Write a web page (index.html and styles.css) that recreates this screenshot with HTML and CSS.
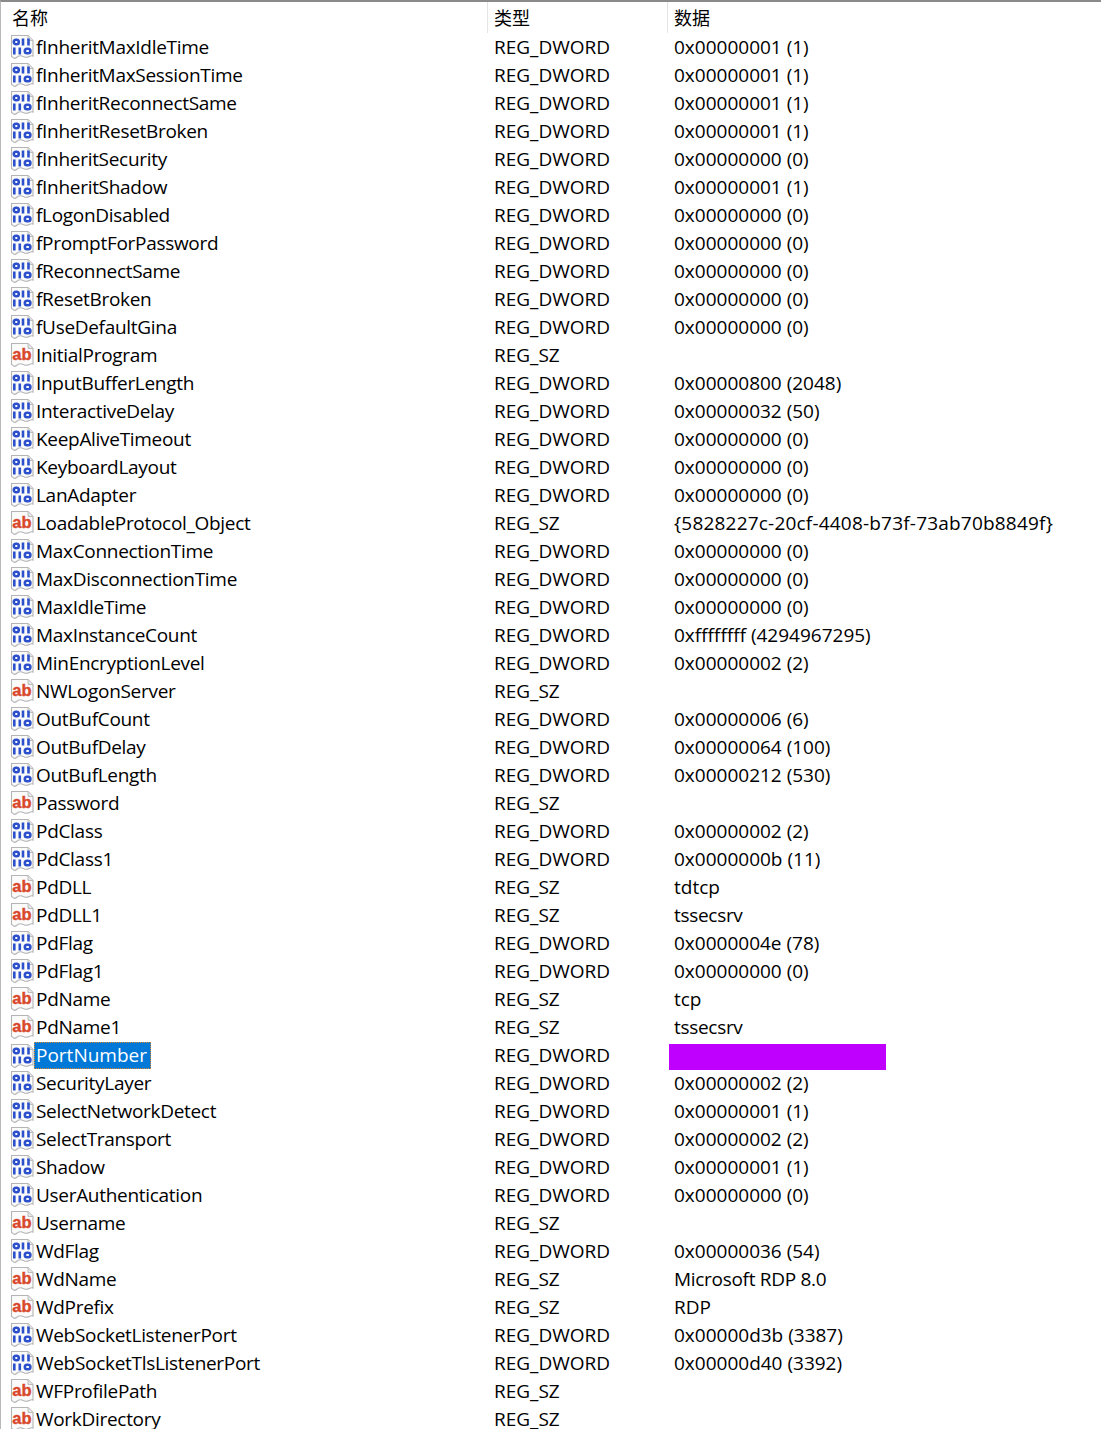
FILE: index.html
```html
<!DOCTYPE html>
<html lang="zh">
<head>
<meta charset="utf-8">
<title>注册表</title>
<link rel="stylesheet" href="styles.css">
</head>
<body>
<svg class="defs" width="0" height="0" aria-hidden="true">
  <symbol id="page" viewBox="0 0 24 24">
    <path d="M1.500 .500H18L23 5.500V21C20.500 19.500 18 23.500 14.500 22S9 20 6.500 22.500S2.500 21.500 1.500 21.500Z" fill="#fbfbfb" stroke="#b4b4b4" stroke-width="1.100"/>
    <path d="M18 .500V5.500H23" fill="#e4e4e4" stroke="#bdbdbd"/>
  </symbol>
  <symbol id="bin" viewBox="0 0 24 24">
    <use href="#page"/>
    <g fill="none" stroke="#2c50cc" stroke-width="2.600">
      <rect x="3.800" y="4.800" width="5" height="4.400" rx="2.200"/>
      <path d="M13 3.500V10.500M18.500 3.500V10.500"/>
      <path d="M4.300 12.500V19.500M9.800 12.500V19.500"/>
      <rect x="14.800" y="13.800" width="5.600" height="4.400" rx="2.200"/>
    </g>
  </symbol>
  <symbol id="str" viewBox="0 0 24 24">
    <use href="#page"/>
    <text x="12" y="17" class="ab">ab</text>
  </symbol>
</svg>
<main class="list">
  <header class="head">
    <div class="hcell first">名称</div>
    <div class="hcell">类型</div>
    <div class="hcell">数据</div>
  </header>
  <div class="row"><div class="name"><svg class="ico"><use href="#bin"/></svg><span>fInheritMaxIdleTime</span></div><div>REG_DWORD</div><div>0x00000001 (1)</div></div>
  <div class="row"><div class="name"><svg class="ico"><use href="#bin"/></svg><span>fInheritMaxSessionTime</span></div><div>REG_DWORD</div><div>0x00000001 (1)</div></div>
  <div class="row"><div class="name"><svg class="ico"><use href="#bin"/></svg><span>fInheritReconnectSame</span></div><div>REG_DWORD</div><div>0x00000001 (1)</div></div>
  <div class="row"><div class="name"><svg class="ico"><use href="#bin"/></svg><span>fInheritResetBroken</span></div><div>REG_DWORD</div><div>0x00000001 (1)</div></div>
  <div class="row"><div class="name"><svg class="ico"><use href="#bin"/></svg><span>fInheritSecurity</span></div><div>REG_DWORD</div><div>0x00000000 (0)</div></div>
  <div class="row"><div class="name"><svg class="ico"><use href="#bin"/></svg><span>fInheritShadow</span></div><div>REG_DWORD</div><div>0x00000001 (1)</div></div>
  <div class="row"><div class="name"><svg class="ico"><use href="#bin"/></svg><span>fLogonDisabled</span></div><div>REG_DWORD</div><div>0x00000000 (0)</div></div>
  <div class="row"><div class="name"><svg class="ico"><use href="#bin"/></svg><span>fPromptForPassword</span></div><div>REG_DWORD</div><div>0x00000000 (0)</div></div>
  <div class="row"><div class="name"><svg class="ico"><use href="#bin"/></svg><span>fReconnectSame</span></div><div>REG_DWORD</div><div>0x00000000 (0)</div></div>
  <div class="row"><div class="name"><svg class="ico"><use href="#bin"/></svg><span>fResetBroken</span></div><div>REG_DWORD</div><div>0x00000000 (0)</div></div>
  <div class="row"><div class="name"><svg class="ico"><use href="#bin"/></svg><span>fUseDefaultGina</span></div><div>REG_DWORD</div><div>0x00000000 (0)</div></div>
  <div class="row"><div class="name"><svg class="ico"><use href="#str"/></svg><span>InitialProgram</span></div><div>REG_SZ</div><div></div></div>
  <div class="row"><div class="name"><svg class="ico"><use href="#bin"/></svg><span>InputBufferLength</span></div><div>REG_DWORD</div><div>0x00000800 (2048)</div></div>
  <div class="row"><div class="name"><svg class="ico"><use href="#bin"/></svg><span>InteractiveDelay</span></div><div>REG_DWORD</div><div>0x00000032 (50)</div></div>
  <div class="row"><div class="name"><svg class="ico"><use href="#bin"/></svg><span>KeepAliveTimeout</span></div><div>REG_DWORD</div><div>0x00000000 (0)</div></div>
  <div class="row"><div class="name"><svg class="ico"><use href="#bin"/></svg><span>KeyboardLayout</span></div><div>REG_DWORD</div><div>0x00000000 (0)</div></div>
  <div class="row"><div class="name"><svg class="ico"><use href="#bin"/></svg><span>LanAdapter</span></div><div>REG_DWORD</div><div>0x00000000 (0)</div></div>
  <div class="row"><div class="name"><svg class="ico"><use href="#str"/></svg><span>LoadableProtocol_Object</span></div><div>REG_SZ</div><div class="guid">{5828227c-20cf-4408-b73f-73ab70b8849f}</div></div>
  <div class="row"><div class="name"><svg class="ico"><use href="#bin"/></svg><span>MaxConnectionTime</span></div><div>REG_DWORD</div><div>0x00000000 (0)</div></div>
  <div class="row"><div class="name"><svg class="ico"><use href="#bin"/></svg><span>MaxDisconnectionTime</span></div><div>REG_DWORD</div><div>0x00000000 (0)</div></div>
  <div class="row"><div class="name"><svg class="ico"><use href="#bin"/></svg><span>MaxIdleTime</span></div><div>REG_DWORD</div><div>0x00000000 (0)</div></div>
  <div class="row"><div class="name"><svg class="ico"><use href="#bin"/></svg><span>MaxInstanceCount</span></div><div>REG_DWORD</div><div>0xffffffff (4294967295)</div></div>
  <div class="row"><div class="name"><svg class="ico"><use href="#bin"/></svg><span>MinEncryptionLevel</span></div><div>REG_DWORD</div><div>0x00000002 (2)</div></div>
  <div class="row"><div class="name"><svg class="ico"><use href="#str"/></svg><span>NWLogonServer</span></div><div>REG_SZ</div><div></div></div>
  <div class="row"><div class="name"><svg class="ico"><use href="#bin"/></svg><span>OutBufCount</span></div><div>REG_DWORD</div><div>0x00000006 (6)</div></div>
  <div class="row"><div class="name"><svg class="ico"><use href="#bin"/></svg><span>OutBufDelay</span></div><div>REG_DWORD</div><div>0x00000064 (100)</div></div>
  <div class="row"><div class="name"><svg class="ico"><use href="#bin"/></svg><span>OutBufLength</span></div><div>REG_DWORD</div><div>0x00000212 (530)</div></div>
  <div class="row"><div class="name"><svg class="ico"><use href="#str"/></svg><span>Password</span></div><div>REG_SZ</div><div></div></div>
  <div class="row"><div class="name"><svg class="ico"><use href="#bin"/></svg><span>PdClass</span></div><div>REG_DWORD</div><div>0x00000002 (2)</div></div>
  <div class="row"><div class="name"><svg class="ico"><use href="#bin"/></svg><span>PdClass1</span></div><div>REG_DWORD</div><div>0x0000000b (11)</div></div>
  <div class="row"><div class="name"><svg class="ico"><use href="#str"/></svg><span>PdDLL</span></div><div>REG_SZ</div><div>tdtcp</div></div>
  <div class="row"><div class="name"><svg class="ico"><use href="#str"/></svg><span>PdDLL1</span></div><div>REG_SZ</div><div class="word">tssecsrv</div></div>
  <div class="row"><div class="name"><svg class="ico"><use href="#bin"/></svg><span>PdFlag</span></div><div>REG_DWORD</div><div>0x0000004e (78)</div></div>
  <div class="row"><div class="name"><svg class="ico"><use href="#bin"/></svg><span>PdFlag1</span></div><div>REG_DWORD</div><div>0x00000000 (0)</div></div>
  <div class="row"><div class="name"><svg class="ico"><use href="#str"/></svg><span>PdName</span></div><div>REG_SZ</div><div>tcp</div></div>
  <div class="row"><div class="name"><svg class="ico"><use href="#str"/></svg><span>PdName1</span></div><div>REG_SZ</div><div class="word">tssecsrv</div></div>
  <div class="row"><div class="name"><svg class="ico"><use href="#bin"/></svg><span class="selected">PortNumber</span></div><div>REG_DWORD</div><div class="redact-cell"><div class="redact"></div></div></div>
  <div class="row"><div class="name"><svg class="ico"><use href="#bin"/></svg><span>SecurityLayer</span></div><div>REG_DWORD</div><div>0x00000002 (2)</div></div>
  <div class="row"><div class="name"><svg class="ico"><use href="#bin"/></svg><span>SelectNetworkDetect</span></div><div>REG_DWORD</div><div>0x00000001 (1)</div></div>
  <div class="row"><div class="name"><svg class="ico"><use href="#bin"/></svg><span>SelectTransport</span></div><div>REG_DWORD</div><div>0x00000002 (2)</div></div>
  <div class="row"><div class="name"><svg class="ico"><use href="#bin"/></svg><span>Shadow</span></div><div>REG_DWORD</div><div>0x00000001 (1)</div></div>
  <div class="row"><div class="name"><svg class="ico"><use href="#bin"/></svg><span>UserAuthentication</span></div><div>REG_DWORD</div><div>0x00000000 (0)</div></div>
  <div class="row"><div class="name"><svg class="ico"><use href="#str"/></svg><span>Username</span></div><div>REG_SZ</div><div></div></div>
  <div class="row"><div class="name"><svg class="ico"><use href="#bin"/></svg><span>WdFlag</span></div><div>REG_DWORD</div><div>0x00000036 (54)</div></div>
  <div class="row"><div class="name"><svg class="ico"><use href="#str"/></svg><span>WdName</span></div><div>REG_SZ</div><div class="word">Microsoft RDP 8.0</div></div>
  <div class="row"><div class="name"><svg class="ico"><use href="#str"/></svg><span>WdPrefix</span></div><div>REG_SZ</div><div>RDP</div></div>
  <div class="row"><div class="name"><svg class="ico"><use href="#bin"/></svg><span>WebSocketListenerPort</span></div><div>REG_DWORD</div><div>0x00000d3b (3387)</div></div>
  <div class="row"><div class="name"><svg class="ico"><use href="#bin"/></svg><span>WebSocketTlsListenerPort</span></div><div>REG_DWORD</div><div>0x00000d40 (3392)</div></div>
  <div class="row"><div class="name"><svg class="ico"><use href="#str"/></svg><span>WFProfilePath</span></div><div>REG_SZ</div><div></div></div>
  <div class="row"><div class="name"><svg class="ico"><use href="#str"/></svg><span>WorkDirectory</span></div><div>REG_SZ</div><div></div></div>
</main>
</body>
</html>
```
FILE: styles.css
```css
html, body {
  margin: 0;
  padding: 0;
  height: 100%;
  overflow: hidden;
  background: #fff;
}
.defs {
  position: absolute;
}
.list {
  height: 1429px;
  box-sizing: border-box;
  overflow: hidden;
  border-top: 2px solid #8a8a8a;
  border-left: 1px solid #b9b9b9;
  font-family: "Open Sans", "Noto Sans CJK SC", sans-serif;
  font-size: 19px;
  color: #000;
}
.head {
  display: grid;
  grid-template-columns: 486px 180px 1fr;
  height: 31px;
}
.hcell {
  padding-left: 6px;
  line-height: 30px;
  border-left: 1px solid #e5e5e5;
  font-family: "Noto Sans CJK SC", sans-serif;
  font-size: 18px;
}
.hcell.first {
  padding-left: 11px;
  border-left: 0;
}
.row {
  display: grid;
  grid-template-columns: 493px 180px 1fr;
  height: 28px;
  line-height: 28px;
  white-space: nowrap;
}
.name {
  display: flex;
  align-items: center;
  padding-left: 9px;
  letter-spacing: -0.3px;
}
.ico {
  width: 24px;
  height: 24px;
  margin-right: 2px;
  flex: none;
}
.ab {
  font-family: "Liberation Sans", sans-serif;
  font-weight: 700;
  font-size: 16.5px;
  letter-spacing: 0;
  fill: #d9482b;
  stroke: #d9482b;
  stroke-width: 0.4px;
  text-anchor: middle;
}
.guid {
  letter-spacing: 0.2px;
}
.word {
  letter-spacing: -0.3px;
}
.selected {
  background: #0078d7;
  color: #fff;
  outline: 1px dotted #e08a2e;
  outline-offset: -1px;
  letter-spacing: 0;
  line-height: 27px;
  padding: 0 4px 0 2px;
  margin-left: -2px;
}
.redact-cell {
  margin-left: -5px;
}
.redact {
  width: 217px;
  height: 26px;
  margin-top: 3px;
  background: #bf00ff;
}
```
